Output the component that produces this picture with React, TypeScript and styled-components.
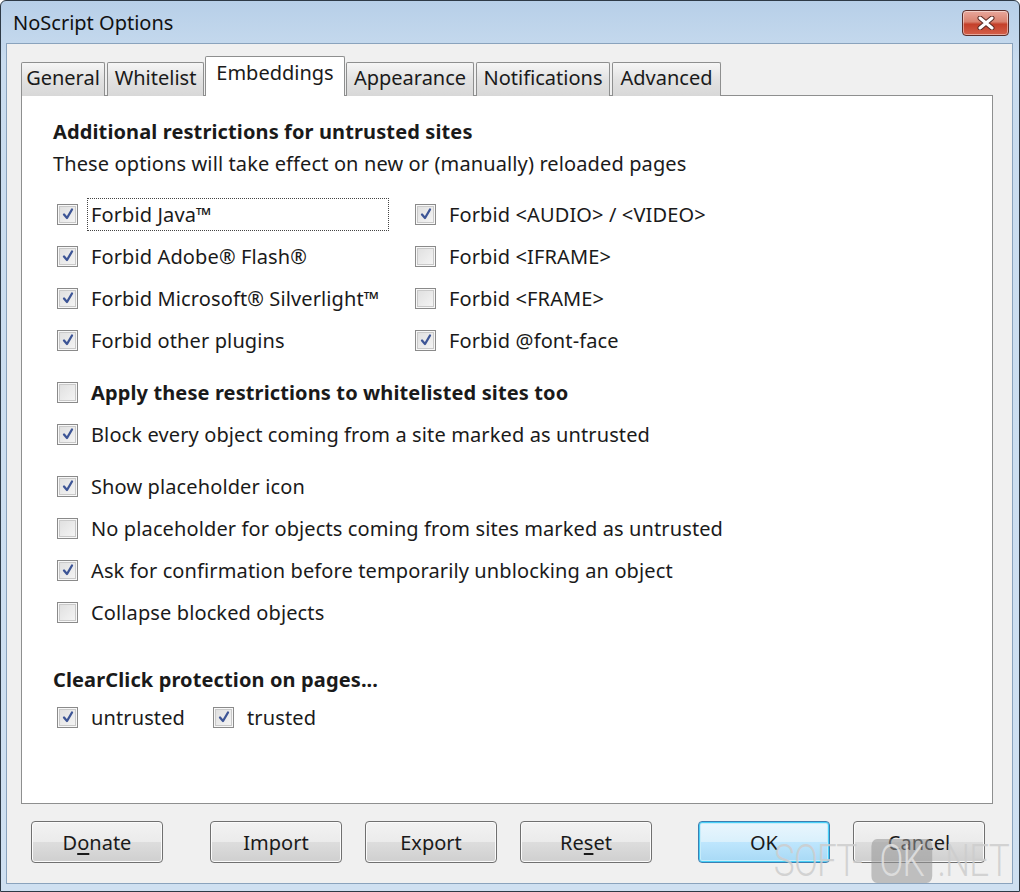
import React from "react";
import styled, { createGlobalStyle, css } from "styled-components";

const GlobalStyle = createGlobalStyle`
  html, body { margin: 0; padding: 0; background: #ffffff; }
  body { font-family: "Noto Sans", "Open Sans", sans-serif; }
  * { box-sizing: border-box; }
`;

const Window = styled.div`
  position: relative;
  width: 1020px;
  height: 892px;
  border: 1px solid #2e3a46;
  border-radius: 6px 6px 0 0;
  background: linear-gradient(#b7cfe8, #c9dcef 60px, #cfe0f1);
  display: flex;
  flex-direction: column;
  padding: 0 6px 7px 5px;
  overflow: hidden;
`;

const TitleBar = styled.div`
  height: 42px;
  display: flex;
  align-items: center;
  justify-content: space-between;
  padding: 0 4px 0 7px;
`;

const Title = styled.span`
  font-family: "Noto Sans", sans-serif;
  font-size: 20px;
  color: #111;
`;

const CloseButton = styled.div`
  width: 47px;
  height: 26px;
  margin-top: 2px;
  border: 1px solid #5a2e2a;
  border-radius: 4px;
  background: linear-gradient(#e8a89c 0%, #d9826f 45%, #c4402a 55%, #d4604a 100%);
  display: flex;
  align-items: center;
  justify-content: center;
  box-shadow: inset 0 0 0 1px rgba(255, 255, 255, 0.45);
`;

const Client = styled.div`
  flex: 1;
  background: #f0f0f0;
  border: 1px solid #8aa3bd;
  display: flex;
  flex-direction: column;
  padding: 13px 19px 0 14px;
`;

const TabStrip = styled.div`
  display: flex;
  align-items: flex-end;
  height: 39px;
  position: relative;
  z-index: 1;
  margin-bottom: -1px;
`;

const Tab = styled.div<{ $active?: boolean; $w: number }>`
  width: ${(p) => p.$w}px;
  height: 34px;
  margin-right: 2px;
  padding-bottom: 5px;
  border: 1px solid #8e8f8f;
  border-bottom: none;
  border-radius: 2px 2px 0 0;
  background: linear-gradient(#f6f6f6, #e2e2e2 50%, #d8d8d8);
  display: flex;
  align-items: center;
  justify-content: center;
  font-size: 20px;
  color: #1a1a1a;
  ${(p) =>
    p.$active &&
    css`
      height: 40px;
      background: #ffffff;
      margin-left: -1px;
      margin-right: 1px;
      padding-bottom: 8px;
    `}
`;

const Panel = styled.div`
  height: 709px;
  background: #ffffff;
  border: 1px solid #8e8f8f;
  padding: 20px 20px 0 31px;
  color: #1a1a1a;
  font-size: 20px;
  letter-spacing: 0.12px;
`;

const Heading = styled.div<{ $mt?: number }>`
  height: 32px;
  line-height: 32px;
  font-weight: 700;
  margin-top: ${(p) => p.$mt ?? 0}px;
`;

const Text = styled.div`
  height: 32px;
  line-height: 32px;
`;

const Grid = styled.div`
  display: grid;
  grid-template-columns: 358px auto;
  margin-top: 13px;
  padding-left: 4px;
`;

const Row = styled.div<{ $mt?: number; $bold?: boolean }>`
  height: 42px;
  display: flex;
  align-items: center;
  margin-top: ${(p) => p.$mt ?? 0}px;
  font-weight: ${(p) => (p.$bold ? 700 : 400)};
`;

const Stack = styled.div`
  padding-left: 4px;
`;

const InlineRow = styled.div`
  display: flex;
  padding-left: 4px;
  gap: 24px;
`;

const Box = styled.span`
  flex: none;
  width: 21px;
  height: 21px;
  border: 1px solid #8a8a8a;
  background: linear-gradient(135deg, #dedede, #f6f6f6);
  display: flex;
  align-items: center;
  justify-content: center;
  margin-right: 9px;
  box-shadow: inset 0 0 0 1px #f8f8f8, inset 0 0 0 2px #c9c9c9;
`;

const Label = styled.span<{ $focus?: boolean }>`
  padding: 3px 4px;
  white-space: nowrap;
  ${(p) =>
    p.$focus &&
    css`
      flex: 1;
      margin-right: 26px;
      outline: 1px dotted #444;
      outline-offset: -1px;
    `}
`;

const Check = ({ on }: { on: boolean }) => (
  <Box>
    {on && (
      <svg width="14" height="14" viewBox="0 0 14 14">
        <path d="M3 7.5 L6 11 L11 2.5" fill="none" stroke="#3d5596" strokeWidth="2.3" strokeLinecap="round" strokeLinejoin="round" />
      </svg>
    )}
  </Box>
);

const Option = ({ on, label, focus, mt, bold }: { on: boolean; label: string; focus?: boolean; mt?: number; bold?: boolean }) => (
  <Row $mt={mt} $bold={bold}>
    <Check on={on} />
    <Label $focus={focus}>{label}</Label>
  </Row>
);

const ButtonBar = styled.div`
  display: flex;
  align-items: center;
  padding: 17px 0 0 10px;
`;

const Group = styled.div<{ $ml: number }>`
  display: flex;
  gap: 23px;
  margin-left: ${(p) => p.$ml}px;
`;

const Button = styled.div<{ $default?: boolean }>`
  width: 132px;
  height: 42px;
  border: 1px solid #707070;
  border-radius: 4px;
  background: linear-gradient(#f2f2f2 0%, #ebebeb 50%, #dddddd 51%, #cfcfcf 100%);
  box-shadow: inset 0 0 0 1px #fbfbfb;
  display: flex;
  align-items: center;
  justify-content: center;
  font-size: 20px;
  color: #1a1a1a;
  ${(p) =>
    p.$default &&
    css`
      border-color: #3c7fb1;
      box-shadow: inset 0 0 0 1px #48d0f8, inset 0 0 0 2px #c8ecfa;
      background: linear-gradient(#eaf6fd 0%, #d9f0fc 50%, #bee6fd 51%, #a7d9f5 100%);
    `}
`;

const U = styled.span`
  text-decoration: underline;
  text-underline-offset: 3px;
`;

const Watermark = styled.div`
  position: absolute;
  right: 10px;
  bottom: 4px;
  display: flex;
  align-items: center;
  font-family: "Roboto", "Liberation Sans", sans-serif;
  font-weight: 300;
  font-size: 44px;
  color: rgba(205, 205, 205, 0.85);
  letter-spacing: -1px;
  pointer-events: none;
  transform: scaleX(0.8);
  transform-origin: right center;
`;

const WatermarkBox = styled.span`
  margin: 0 7px 0 12px;
  padding: 0 10px;
  height: 44px;
  display: flex;
  align-items: center;
  border-radius: 7px;
  background: rgba(150, 150, 150, 0.55);
  color: rgba(225, 225, 225, 0.9);
`;

export default function App() {
  return (
    <>
      <GlobalStyle />
      <Window>
        <TitleBar>
          <Title>NoScript Options</Title>
          <CloseButton>
            <svg width="18" height="14" viewBox="0 0 18 14">
              <path d="M3 2 L15 12 M15 2 L3 12" stroke="#5a2a24" strokeWidth="5" strokeLinecap="round" />
              <path d="M3 2 L15 12 M15 2 L3 12" stroke="#ffffff" strokeWidth="3" strokeLinecap="round" />
            </svg>
          </CloseButton>
        </TitleBar>
        <Client>
          <TabStrip>
            <Tab $w={84}>General</Tab>
            <Tab $w={97}>Whitelist</Tab>
            <Tab $w={140} $active>Embeddings</Tab>
            <Tab $w={128}>Appearance</Tab>
            <Tab $w={134}>Notifications</Tab>
            <Tab $w={109}>Advanced</Tab>
          </TabStrip>
          <Panel>
            <Heading>Additional restrictions for untrusted sites</Heading>
            <Text>These options will take effect on new or (manually) reloaded pages</Text>
            <Grid>
              <Option on label="Forbid Java™" focus />
              <Option on label="Forbid <AUDIO> / <VIDEO>" />
              <Option on label="Forbid Adobe® Flash®" />
              <Option on={false} label="Forbid <IFRAME>" />
              <Option on label="Forbid Microsoft® Silverlight™" />
              <Option on={false} label="Forbid <FRAME>" />
              <Option on label="Forbid other plugins" />
              <Option on label="Forbid @font-face" />
            </Grid>
            <Stack>
              <Option on={false} label="Apply these restrictions to whitelisted sites too" bold mt={10} />
              <Option on label="Block every object coming from a site marked as untrusted" />
              <Option on label="Show placeholder icon" mt={10} />
              <Option on={false} label="No placeholder for objects coming from sites marked as untrusted" />
              <Option on label="Ask for confirmation before temporarily unblocking an object" />
              <Option on={false} label="Collapse blocked objects" />
            </Stack>
            <Heading $mt={31}>ClearClick protection on pages...</Heading>
            <InlineRow>
              <Option on label="untrusted" />
              <Option on label="trusted" />
            </InlineRow>
          </Panel>
          <ButtonBar>
            <Group $ml={0}>
              <Button>
                D<U>o</U>nate
              </Button>
            </Group>
            <Group $ml={47}>
              <Button>Import</Button>
              <Button>Export</Button>
              <Button>
                Re<U>s</U>et
              </Button>
            </Group>
            <Group $ml={46}>
              <Button $default>OK</Button>
              <Button>Cancel</Button>
            </Group>
          </ButtonBar>
        </Client>
        <Watermark>
          SOFT-<WatermarkBox>OK</WatermarkBox>.NET
        </Watermark>
      </Window>
    </>
  );
}
